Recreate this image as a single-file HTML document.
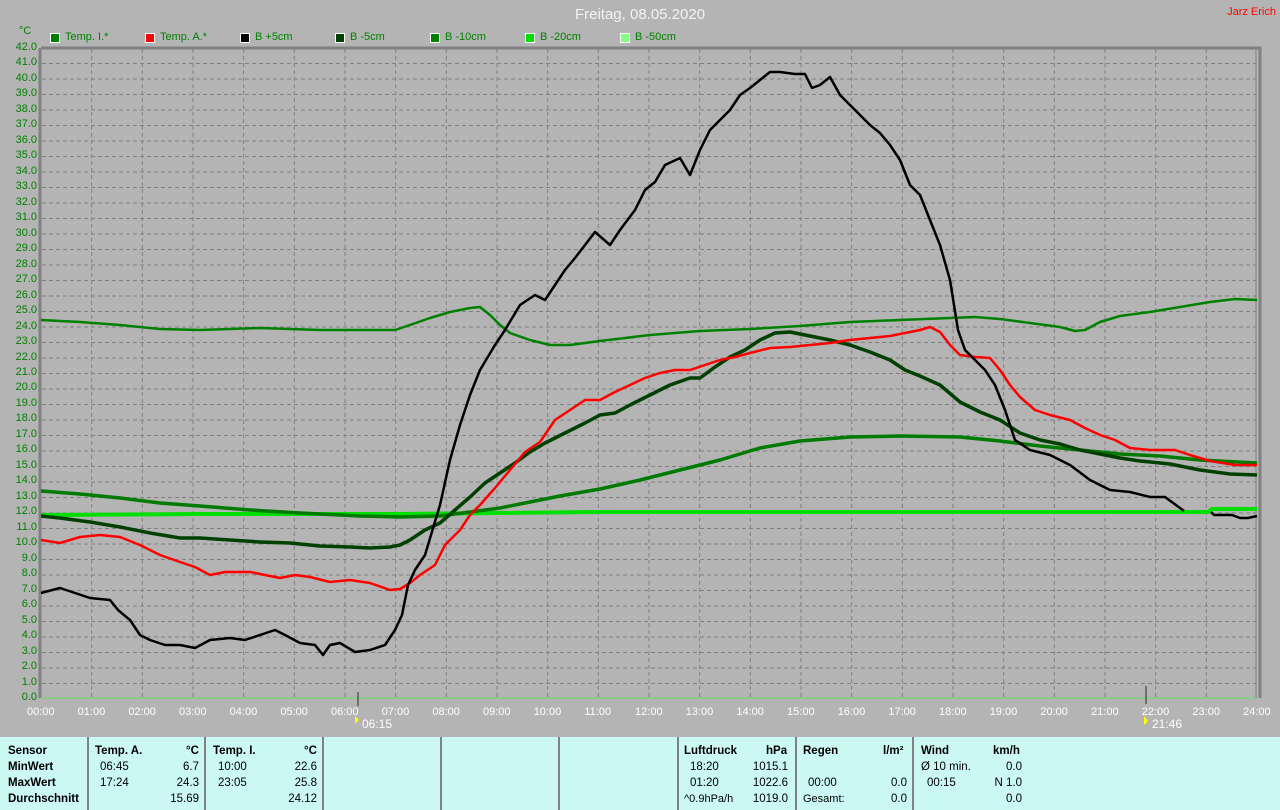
<!DOCTYPE html>
<html><head><meta charset="utf-8"><style>
body{margin:0;width:1280px;height:810px;background:#b4b4b4;font-family:"Liberation Sans",sans-serif;overflow:hidden;position:relative}
.t{position:absolute;font-size:12px;white-space:nowrap}
.p{position:absolute;left:0;top:737px;width:1280px;height:73px;background:#ccf8f4}
.p div{position:absolute;font-size:11.5px;white-space:nowrap;color:#000}
.b{font-weight:bold}
.sep{position:absolute;top:0;width:2px;height:73px;background:#808080}
</style></head><body>
<svg width="1280" height="810" style="position:absolute;left:0;top:0">
<g stroke="#808080" stroke-width="1" stroke-dasharray="4,3" fill="none">
<path id="hg" d="M42 63.5H1256M42 79H1256M42 94.5H1256M42 110H1256M42 125.5H1256M42 141H1256M42 156.5H1256M42 172H1256M42 187.5H1256M42 203H1256M42 218.5H1256M42 234H1256M42 249.5H1256M42 265H1256M42 280.5H1256M42 296H1256M42 311.5H1256M42 327H1256M42 342.5H1256M42 358H1256M42 373.5H1256M42 389H1256M42 404.5H1256M42 420H1256M42 435.5H1256M42 451H1256M42 466.5H1256M42 482H1256M42 497.5H1256M42 513H1256M42 528.5H1256M42 544H1256M42 559.5H1256M42 575H1256M42 590.5H1256M42 606H1256M42 621.5H1256M42 637H1256M42 652.5H1256M42 668H1256M42 683.5H1256"/>
<path d="M91.7 49V698M142.3 49V698M193 49V698M243.7 49V698M294.3 49V698M345 49V698M395.7 49V698M446.3 49V698M497 49V698M547.7 49V698M598.3 49V698M649 49V698M699.7 49V698M750.3 49V698M801 49V698M851.7 49V698M902.3 49V698M953 49V698M1003.7 49V698M1054.3 49V698M1105 49V698M1155.7 49V698M1206.3 49V698"/>
</g>
<path d="M41 48H1260V698" stroke="#808080" stroke-width="3" fill="none"/>
<path d="M40 48V698" stroke="#808080" stroke-width="3"/>
<path d="M1256 48V698" stroke="#808080" stroke-width="1"/>
<path d="M41 698H1256" stroke="#80d080" stroke-width="1.5"/>
<path d="M358 692V706M1146 686V704" stroke="#707070" stroke-width="2"/>
<g fill="none" stroke-linejoin="round" stroke-width="3">
<polyline stroke="#00e000" stroke-width="4" points="41,515 200,514 400,514 600,512 1000,512 1208,512 1212,509 1257,509"/>
<polyline stroke="#007a00" stroke-width="3.5" points="41,491 80,494 120,498 160,503 200,506 250,510 300,513 360,516 400,517 440,516 470,512 500,508 530,502 560,496 600,489 640,480 680,470 720,460 760,448 800,441 850,437 900,436 960,437 1000,441 1040,446 1080,450 1120,454 1160,456 1200,460 1257,463"/>
<polyline stroke="#008000" stroke-width="2.5" points="41,320 80,322 120,325 160,329 200,330 260,328 320,330 360,330 395,330 410,325 430,318 450,312 470,308 480,307 490,315 500,325 510,333 530,340 550,345 570,345 600,341 650,335 700,331 750,329 800,326 850,322 900,320 950,318 975,317 1000,319 1030,323 1060,327 1075,331 1085,330 1100,322 1120,316 1150,312 1180,307 1210,302 1235,299 1257,300"/>
<polyline stroke="#004000" stroke-width="3.5" points="41,516 60,518 90,522 120,527 150,533 180,538 200,538 230,540 260,542 290,543 320,546 350,547 370,548 390,547 400,545 410,540 425,530 440,523 455,510 470,497 485,483 500,473 515,463 530,452 545,443 565,433 585,423 600,415 615,413 630,405 650,395 670,385 690,378 700,378 715,367 730,357 745,350 760,340 775,333 790,332 810,336 830,340 850,345 870,352 890,360 905,370 920,376 940,385 960,402 980,412 1000,420 1020,433 1040,440 1060,444 1080,450 1100,454 1120,458 1140,461 1170,464 1200,470 1230,474 1257,475"/>
<polyline stroke="#ff0000" stroke-width="2.5" points="41,540 60,543 80,537 100,535 120,537 140,545 160,555 180,562 195,567 210,575 225,572 250,572 265,575 280,578 295,575 310,577 330,582 350,580 370,583 390,590 400,589 410,583 420,575 435,565 445,545 460,530 470,515 480,505 495,488 510,470 525,452 540,442 555,420 570,410 585,400 600,400 615,392 630,385 645,378 660,373 675,370 690,370 705,365 720,360 735,357 750,353 770,348 790,347 810,345 830,343 850,340 870,338 890,336 905,333 920,330 930,327 940,332 950,345 960,355 975,357 990,358 1000,370 1010,385 1020,397 1035,410 1050,415 1070,420 1085,428 1100,435 1115,440 1130,448 1150,450 1175,450 1190,455 1210,461 1235,465 1257,465"/>
<polyline stroke="#000" stroke-width="2.5" points="41,593 60,588 75,593 90,598 110,600 118,610 130,620 140,635 150,640 165,645 180,645 195,648 210,640 230,638 245,640 260,635 275,630 285,635 300,643 315,645 323,655 330,645 340,643 355,652 370,650 385,645 395,630 402,615 408,585 415,570 425,555 440,505 450,460 460,425 470,395 480,370 495,345 505,330 520,305 535,295 545,300 555,285 565,270 575,258 585,245 595,232 610,245 620,230 635,210 645,190 655,182 665,165 680,158 690,175 700,150 710,130 720,120 730,110 740,95 750,88 760,80 770,72 780,72 795,74 805,74 812,88 820,85 830,77 840,95 850,105 860,115 870,125 880,133 890,145 900,160 910,185 920,195 930,220 940,245 950,280 958,330 965,350 975,360 985,370 995,385 1005,410 1015,440 1030,450 1050,455 1070,465 1090,480 1110,490 1130,492 1150,497 1165,497 1180,508 1184,511"/>
<polyline stroke="#000" stroke-width="2.5" points="1211,512 1214,515 1232,515 1240,518 1248,518 1257,516"/>
</g>
<path d="M355 716l4 4-4 4z" fill="#ffff00"/>
<path d="M1144 716l4 5-4 4z" fill="#ffff00"/>
</svg>
<div class="t" style="left:0;width:1280px;text-align:center;top:6px;font-size:15px;color:#f4f4f4">Freitag, 08.05.2020</div>
<div class="t" style="right:4px;top:6px;color:#f00;font-size:11px">Jarz Erich</div>
<div class="t" style="left:19px;top:25px;color:#008000;font-size:11px">°C</div>
<div id="legend"></div>
<div id="yl"></div>
<div id="xl"></div>
<div class="t" style="left:362px;top:717px;color:#fff">06:15</div>
<div class="t" style="left:1152px;top:717px;color:#fff">21:46</div>
<div class="p">
<div class="sep" style="left:87px"></div><div class="sep" style="left:204px"></div><div class="sep" style="left:322px"></div><div class="sep" style="left:440px"></div><div class="sep" style="left:558px"></div><div class="sep" style="left:677px"></div><div class="sep" style="left:795px"></div><div class="sep" style="left:912px"></div>
<div class="b" style="left:8px;top:8px">Sensor</div><div class="b" style="left:8px;top:24px">MinWert</div><div class="b" style="left:8px;top:40px">MaxWert</div><div class="b" style="left:8px;top:56px">Durchschnitt</div>
<div class="b" style="left:95px;top:8px">Temp. A.</div><div class="b" style="left:186px;top:8px">°C</div>
<div style="left:100px;top:24px">06:45</div><div style="right:1081px;top:24px">6.7</div>
<div style="left:100px;top:40px">17:24</div><div style="right:1081px;top:40px">24.3</div>
<div style="right:1081px;top:56px">15.69</div>
<div class="b" style="left:213px;top:8px">Temp. I.</div><div class="b" style="left:304px;top:8px">°C</div>
<div style="left:218px;top:24px">10:00</div><div style="right:963px;top:24px">22.6</div>
<div style="left:218px;top:40px">23:05</div><div style="right:963px;top:40px">25.8</div>
<div style="right:963px;top:56px">24.12</div>
<div class="b" style="left:684px;top:8px">Luftdruck</div><div class="b" style="left:766px;top:8px">hPa</div>
<div style="left:690px;top:24px">18:20</div><div style="right:492px;top:24px">1015.1</div>
<div style="left:690px;top:40px">01:20</div><div style="right:492px;top:40px">1022.6</div>
<div style="left:684px;top:56px;font-size:11px">^0.9hPa/h</div><div style="right:492px;top:56px">1019.0</div>
<div class="b" style="left:803px;top:8px">Regen</div><div class="b" style="left:883px;top:8px">l/m²</div>
<div style="left:808px;top:40px">00:00</div><div style="right:373px;top:40px">0.0</div>
<div style="left:803px;top:56px;font-size:11px">Gesamt:</div><div style="right:373px;top:56px">0.0</div>
<div class="b" style="left:921px;top:8px">Wind</div><div class="b" style="left:993px;top:8px">km/h</div>
<div style="left:921px;top:24px">Ø 10 min.</div><div style="right:258px;top:24px">0.0</div>
<div style="left:927px;top:40px">00:15</div><div style="right:258px;top:40px">N 1.0</div>
<div style="right:258px;top:56px">0.0</div>
</div>
<script>
var L=[["Temp. I.*","#008000",50],["Temp. A.*","#ff0000",145],["B +5cm","#000",240],["B -5cm","#004000",335],["B -10cm","#008000",430],["B -20cm","#00e000",525],["B -50cm","#80ff80",620]],h="";
L.forEach(function(l){h+='<div style="position:absolute;left:'+l[2]+'px;top:33px;width:8px;height:8px;background:'+l[1]+';border:1px solid #fff"></div><div class="t" style="left:'+(l[2]+15)+'px;top:31px;color:#008000;font-size:11px">'+l[0]+'</div>';});
document.getElementById("legend").innerHTML=h;h="";
for(var v=0;v<=42;v++){h+='<div class="t" style="right:1243px;top:'+(698-v*15.476-7)+'px;color:#008000;font-size:11px">'+v+'.0</div>';}
document.getElementById("yl").innerHTML=h;h="";
for(var i=0;i<=24;i++){var s=(i<10?"0":"")+i+":00";h+='<div class="t" style="left:'+(41+i*50.67-14)+'px;top:706px;color:#fff;font-size:11px">'+s+'</div>';}
document.getElementById("xl").innerHTML=h;
</script>
</body></html>
